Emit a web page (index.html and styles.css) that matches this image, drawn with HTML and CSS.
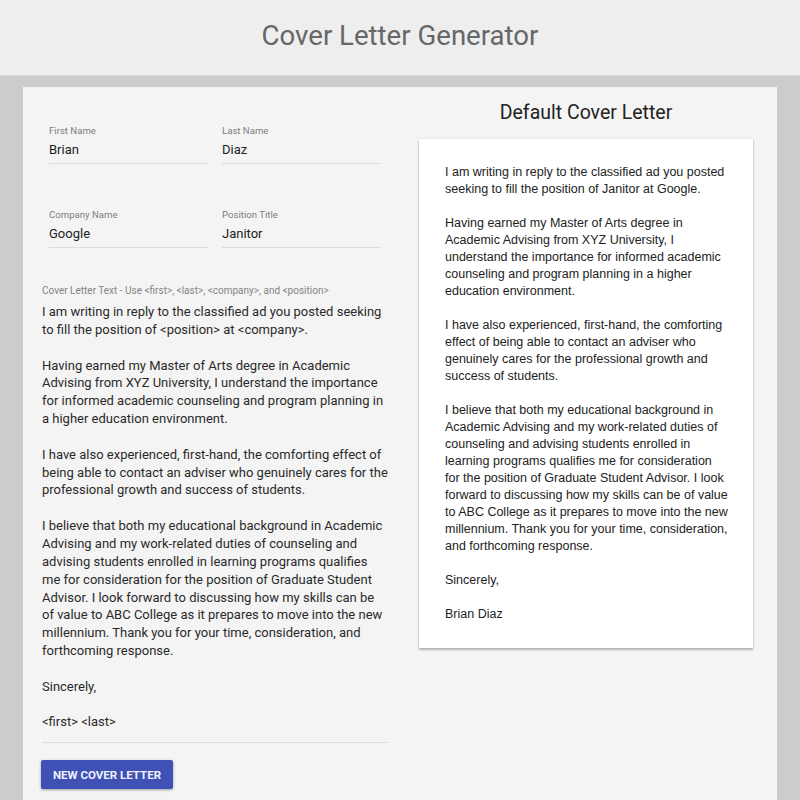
FILE: index.html
```html
<!DOCTYPE html>
<html lang="en">
<head>
<meta charset="utf-8">
<title>Cover Letter Generator</title>
<link rel="stylesheet" href="styles.css">
</head>
<body>
<header class="app-header">
  <h1 class="app-title">Cover Letter Generator</h1>
</header>
<main class="card">
  <section class="editor">
    <div class="field-row">
      <div class="field">
        <div class="field-label">First Name</div>
        <div class="field-value">Brian</div>
      </div>
      <div class="field">
        <div class="field-label">Last Name</div>
        <div class="field-value">Diaz</div>
      </div>
    </div>
    <div class="field-row second">
      <div class="field">
        <div class="field-label">Company Name</div>
        <div class="field-value">Google</div>
      </div>
      <div class="field">
        <div class="field-label">Position Title</div>
        <div class="field-value">Janitor</div>
      </div>
    </div>
    <div class="text-label">Cover Letter Text - Use &lt;first&gt;, &lt;last&gt;, &lt;company&gt;, and &lt;position&gt;</div>
    <div class="text-area">I am writing in reply to the classified ad you posted seeking
to fill the position of &lt;position&gt; at &lt;company&gt;.

Having earned my Master of Arts degree in Academic
Advising from XYZ University, I understand the importance
for informed academic counseling and program planning in
a higher education environment.

I have also experienced, first-hand, the comforting effect of
being able to contact an adviser who genuinely cares for the
professional growth and success of students.

I believe that both my educational background in Academic
Advising and my work-related duties of counseling and
advising students enrolled in learning programs qualifies
me for consideration for the position of Graduate Student
Advisor. I look forward to discussing how my skills can be
of value to ABC College as it prepares to move into the new
millennium. Thank you for your time, consideration, and
forthcoming response.

Sincerely,

&lt;first&gt; &lt;last&gt;</div>
    <button class="btn-primary" type="button">NEW COVER LETTER</button>
  </section>
  <section class="preview">
    <h2 class="preview-title">Default Cover Letter</h2>
    <div class="paper">I am writing in reply to the classified ad you posted
seeking to fill the position of Janitor at Google.

Having earned my Master of Arts degree in
Academic Advising from XYZ University, I
understand the importance for informed academic
counseling and program planning in a higher
education environment.

I have also experienced, first-hand, the comforting
effect of being able to contact an adviser who
genuinely cares for the professional growth and
success of students.

I believe that both my educational background in
Academic Advising and my work-related duties of
counseling and advising students enrolled in
learning programs qualifies me for consideration
for the position of Graduate Student Advisor. I look
forward to discussing how my skills can be of value
to ABC College as it prepares to move into the new
millennium. Thank you for your time, consideration,
and forthcoming response.

Sincerely,

Brian Diaz</div>
  </section>
</main>
</body>
</html>
```
FILE: styles.css
```css
html, body {
  margin: 0;
  padding: 0;
}
body {
  background: #cccccc;
  font-family: Roboto, "Liberation Sans", sans-serif;
  height: 800px;
  overflow: hidden;
}
.app-header {
  background: #eeeeee;
  height: 75px;
  box-shadow: 0 1px 0 #dadada;
  display: flex;
  align-items: center;
  justify-content: center;
}
.app-title {
  margin: 0;
  font-size: 27.6px;
  font-weight: 400;
  color: #676767;
  line-height: 32px;
  padding-bottom: 3px;
}
.card {
  margin: 12px 23px 0;
  background: #f4f4f4;
  display: grid;
  grid-template-columns: 377px 1fr;
  min-height: 740px;
}
.editor {
  padding: 38px 12px 0 19px;
}
.field-row {
  display: grid;
  grid-template-columns: 1fr 1fr;
  column-gap: 14px;
  padding: 0 7px;
}
.field-row.second {
  margin-top: 45px;
}
.field-label {
  font-size: 9.6px;
  line-height: 12px;
  color: #7d7d7d;
}
.field-value {
  margin-top: 3px;
  font-size: 13px;
  line-height: 20px;
  color: #222;
  padding-bottom: 3px;
  border-bottom: 1px solid #dcdcdc;
}
.text-label {
  margin-top: 37px;
  font-size: 10px;
  line-height: 12px;
  color: #858585;
}
.text-area {
  margin-top: 6px;
  white-space: pre;
  font-size: 13px;
  line-height: 17.85px;
  color: #2a2a2a;
  padding-bottom: 11px;
  border-bottom: 1px solid #dcdcdc;
}
.btn-primary {
  margin-top: 17px;
  margin-left: -1px;
  display: block;
  width: 132px;
  height: 29px;
  border: 0;
  border-radius: 2px;
  background: #3f51b5;
  color: #f0f0ff;
  font-family: Roboto, "Liberation Sans", sans-serif;
  font-size: 11.5px;
  font-weight: 700;
  letter-spacing: 0;
  box-shadow: 0 1px 3px rgba(0,0,0,0.35);
  padding: 0;
}
.preview {
  padding: 14px 24px 0 19px;
}
.preview-title {
  margin: 0;
  text-align: center;
  font-size: 19.5px;
  line-height: 24px;
  font-weight: 400;
  color: #222;
}
.paper {
  margin-top: 14px;
  background: #ffffff;
  box-shadow: 0 2px 2px rgba(0,0,0,0.25), 0 0 2px rgba(0,0,0,0.12);
  padding: 25px 10px 25px 26px;
  white-space: pre;
  font-family: "Liberation Sans", Arial, sans-serif;
  font-size: 12.5px;
  line-height: 17px;
  color: #222;
}
```
